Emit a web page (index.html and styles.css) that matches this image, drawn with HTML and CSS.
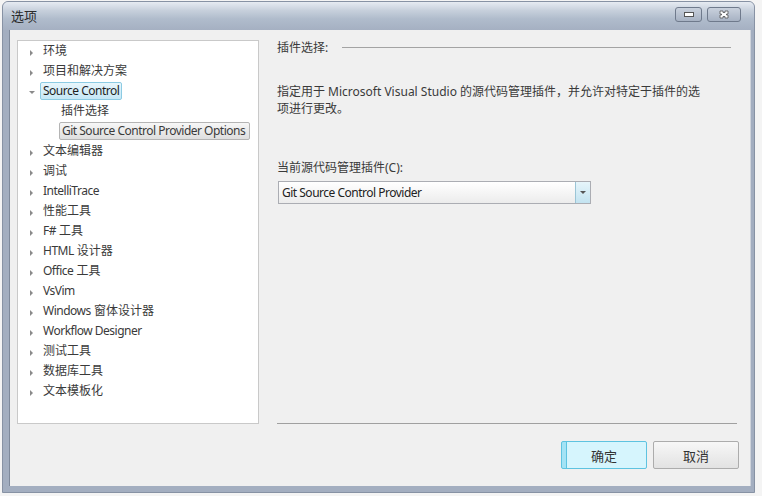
FILE: index.html
```html
<!DOCTYPE html>
<html lang="zh-CN">
<head>
<meta charset="utf-8">
<title>选项</title>
<link rel="stylesheet" href="styles.css">
</head>
<body>
<div class="window">
  <div class="titlebar">
    <span class="title">选项</span>
    <div class="caption-buttons">
      <span class="cap-btn"><span class="min-glyph"></span></span>
      <span class="cap-btn cap-close"><svg width="10" height="9" viewBox="0 0 10 9"><path d="M1 1h3v1.5h2V1h3v3H7.5v1H9v3H6V6.5H4V8H1V5h1.5V4H1z" fill="#fff" stroke="#555" stroke-width="0.8"/></svg></span>
    </div>
  </div>
  <div class="client">
    <div class="main">
      <div class="tree">
        <div class="row"><span class="arr"></span><span class="lbl">环境</span></div>
        <div class="row"><span class="arr"></span><span class="lbl">项目和解决方案</span></div>
        <div class="row"><span class="arr open"></span><span class="lbl sel en">Source Control</span></div>
        <div class="row child"><span class="lbl">插件选择</span></div>
        <div class="row child"><span class="lbl sel2 en">Git Source Control Provider Options</span></div>
        <div class="row"><span class="arr"></span><span class="lbl">文本编辑器</span></div>
        <div class="row"><span class="arr"></span><span class="lbl">调试</span></div>
        <div class="row"><span class="arr"></span><span class="lbl en">IntelliTrace</span></div>
        <div class="row"><span class="arr"></span><span class="lbl">性能工具</span></div>
        <div class="row"><span class="arr"></span><span class="lbl"><span class="en">F#</span> 工具</span></div>
        <div class="row"><span class="arr"></span><span class="lbl"><span class="en">HTML</span> 设计器</span></div>
        <div class="row"><span class="arr"></span><span class="lbl"><span class="en">Office</span> 工具</span></div>
        <div class="row"><span class="arr"></span><span class="lbl en">VsVim</span></div>
        <div class="row"><span class="arr"></span><span class="lbl"><span class="en">Windows</span> 窗体设计器</span></div>
        <div class="row"><span class="arr"></span><span class="lbl en">Workflow Designer</span></div>
        <div class="row"><span class="arr"></span><span class="lbl">测试工具</span></div>
        <div class="row"><span class="arr"></span><span class="lbl">数据库工具</span></div>
        <div class="row"><span class="arr"></span><span class="lbl">文本模板化</span></div>
      </div>
      <div class="panel">
        <div class="group-head"><span>插件选择:</span><span class="rule"></span></div>
        <p class="desc">指定用于 Microsoft Visual Studio 的源代码管理插件，并允许对特定于插件的选<br>项进行更改。</p>
        <div class="field-label">当前源代码管理插件(C):</div>
        <div class="combo"><span class="combo-text en">Git Source Control Provider</span><span class="combo-btn"><span class="combo-arrow"></span></span></div>
      </div>
    </div>
    <div class="buttons">
      <button class="btn btn-default">确定</button>
      <button class="btn">取消</button>
    </div>
  </div>
</div>
</body>
</html>
```
FILE: styles.css
```css
html, body {
  margin: 0;
  padding: 0;
}
body {
  width: 762px;
  height: 496px;
  background: #f4f4f4;
  font-family: "Segoe UI", "Noto Sans", "Noto Sans CJK SC", sans-serif;
  font-size: 12px;
  color: #3a3a3a;
  overflow: hidden;
}
.en {
  letter-spacing: -0.5px;
}
.window {
  margin: 1px 0 0 2px;
  width: 753px;
  height: 492px;
  border: 1px solid #8792a4;
  border-radius: 6px 6px 0 0;
  background: #a3aec0;
  display: flex;
  flex-direction: column;
  box-sizing: border-box;
}
.titlebar {
  height: 28px;
  flex: none;
  display: flex;
  align-items: flex-start;
  justify-content: space-between;
  border-radius: 5px 5px 0 0;
  background: linear-gradient(#e6ebf2 0%, #c7d0dc 30%, #b0bccc 60%, #a5b0c2 100%);
}
.title {
  margin: 4px 0 0 8px;
  font-size: 13px;
  color: #2b2b2b;
  font-family: "Noto Sans CJK SC", sans-serif;
}
.caption-buttons {
  display: flex;
  gap: 5px;
  margin: 5px 13px 0 0;
}
.cap-btn {
  width: 25px;
  height: 13px;
  border: 1px solid #6f7a8c;
  border-radius: 3px;
  background: linear-gradient(#c9d1dd, #a7b2c3);
  display: flex;
  align-items: center;
  justify-content: center;
}
.cap-close {
  width: 32px;
}
.min-glyph {
  width: 8px;
  height: 3px;
  background: #fff;
  border: 1px solid #555;
}
.client {
  flex: 1;
  margin: 0 3px 6px 6px;
  background: #f0f0f0;
  border-left: 1px solid #7e899b;
  border-right: 1px solid #cfd4dc;
  padding: 10px 11px 17px 7px;
  display: flex;
  flex-direction: column;
}
.main {
  display: flex;
  height: 384px;
  flex: none;
}
.tree {
  width: 242px;
  box-sizing: border-box;
  border: 1px solid #c9c9c9;
  background: #fff;
}
.row {
  height: 20px;
  display: flex;
  align-items: center;
  padding-left: 11px;
  white-space: nowrap;
}
.row.child {
  padding-left: 43px;
}
.arr {
  width: 0;
  height: 0;
  border-left: 3px solid #8a8a8a;
  border-top: 3px solid transparent;
  border-bottom: 3px solid transparent;
  margin: 3px 10px 0 1px;
}
.arr.open {
  border-left: 3px solid transparent;
  border-right: 3px solid transparent;
  border-top: 3px solid #8a8a8a;
  border-bottom: 0;
  margin: 2px 8px 0 0;
}
.lbl {
  line-height: 16px;
}
.sel {
  margin-left: -3px;
  padding: 0 2px;
  border: 1px solid #8ccbe3;
  border-radius: 2px;
  background: linear-gradient(#e8f6fc, #c5e7f6);
  color: #1e1e1e;
}
.sel2 {
  margin-left: -2px;
  padding: 0 4px 0 2px;
  border: 1px solid #b4b4b4;
  border-radius: 2px;
  background: linear-gradient(#f7f7f7, #dedede);
}
.panel {
  flex: 1;
  margin-left: 18px;
  margin-right: 2px;
  border-bottom: 1px solid #a0a0a0;
  display: flex;
  flex-direction: column;
}
.group-head {
  display: flex;
  align-items: center;
  padding-right: 6px;
  height: 16px;
  line-height: 16px;
}
.rule {
  flex: 1;
  height: 1px;
  background: #a3a3a3;
  margin: 0 0 2px 14px;
}
.desc {
  margin: 27px 0 0;
  line-height: 17px;
}
.field-label {
  margin-top: 43px;
  line-height: 16px;
}
.combo {
  margin-top: 5px;
  margin-left: 1px;
  width: 313px;
  height: 23px;
  box-sizing: border-box;
  border: 1px solid #abadb3;
  background: linear-gradient(#ffffff, #ececec);
  display: flex;
  align-items: center;
  justify-content: space-between;
}
.combo-text {
  padding-left: 3px;
  color: #222;
}
.combo-btn {
  width: 14px;
  height: 21px;
  border-left: 1px solid #9bc5d6;
  background: linear-gradient(#e6f5fb, #c3e3f0);
  display: flex;
  align-items: center;
  justify-content: center;
}
.combo-arrow {
  width: 0;
  height: 0;
  border-left: 3px solid transparent;
  border-right: 3px solid transparent;
  border-top: 3px solid #555;
}
.buttons {
  margin-top: 17px;
  display: flex;
  justify-content: flex-end;
  gap: 6px;
}
.btn {
  width: 86px;
  height: 28px;
  box-sizing: border-box;
  border: 1px solid #acacac;
  border-radius: 2px;
  background: linear-gradient(#f7f7f7, #e2e2e2);
  font-family: "Noto Sans CJK SC", sans-serif;
  font-size: 13px;
  color: #333;
  padding: 0;
}
.btn-default {
  border: 1px solid #5ec3e0;
  background: linear-gradient(90deg, #a4e3f5 0, #a4e3f5 4px, #5ec3e0 4px, #5ec3e0 5px, #d6f5fd 5px, #d6f5fd 100%);
}
```
